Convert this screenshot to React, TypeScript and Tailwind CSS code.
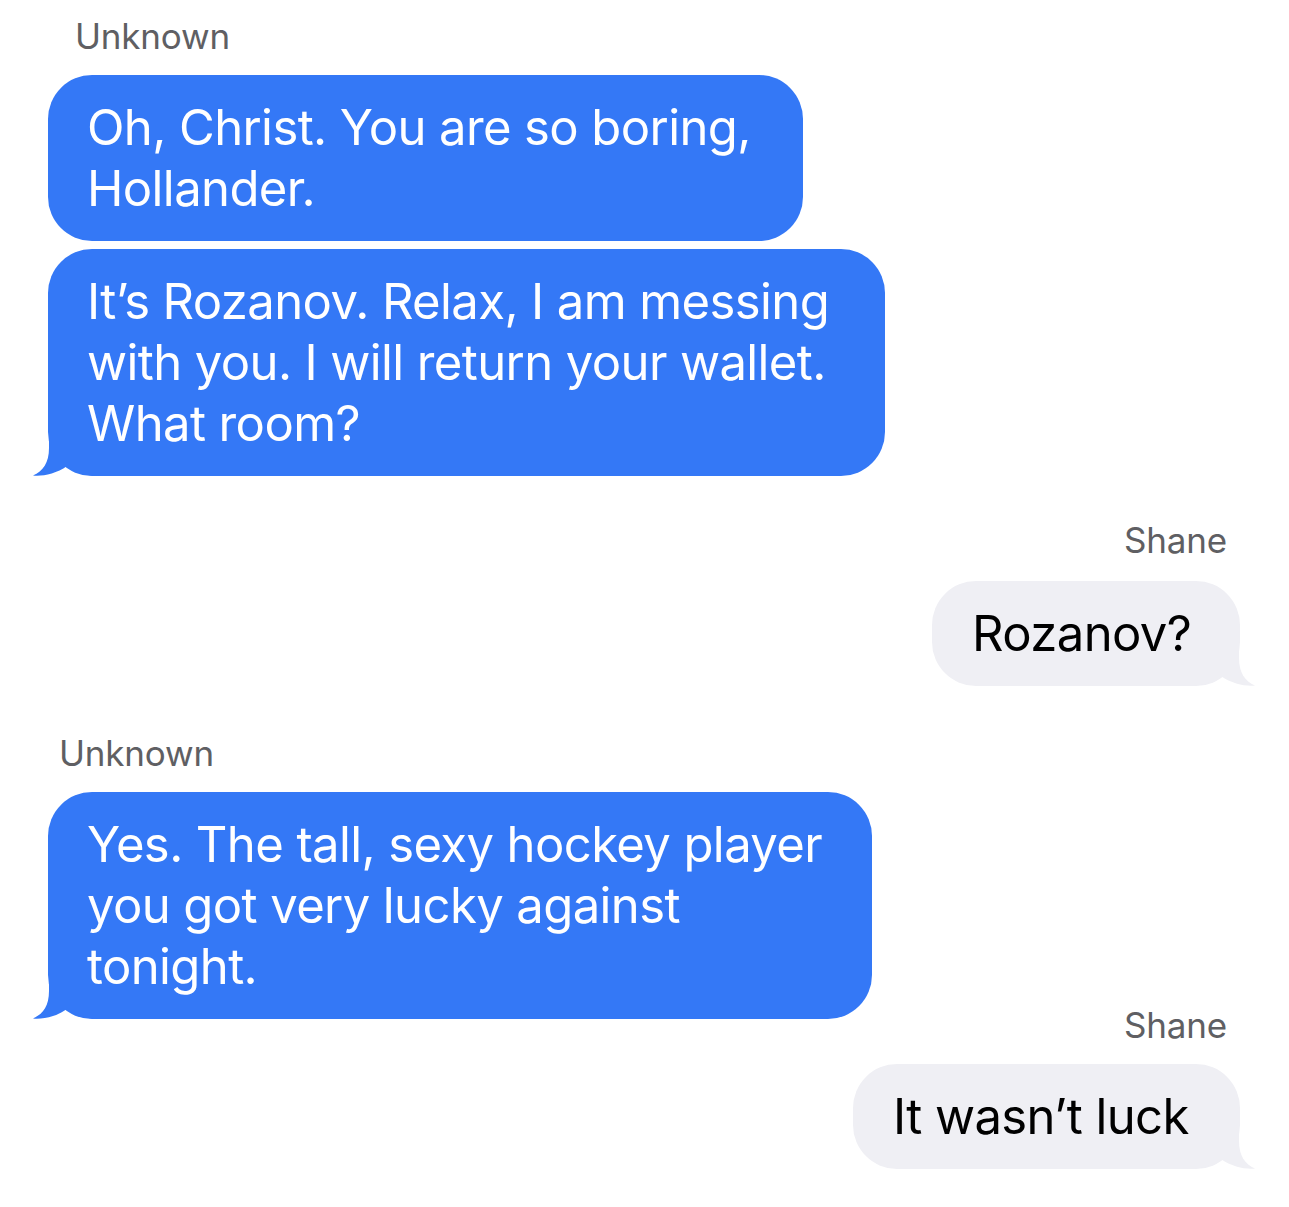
import React from "react";

type Side = "left" | "right";

function Tail({ side }: { side: Side }) {
  if (side === "left") {
    return (
      <svg
        className="absolute bottom-0 left-[-15px] fill-[#3478f6]"
        width="67"
        height="40"
        viewBox="0 0 67 40"
      >
        <path d="M16 0 L16 12 C16 27 10 35 0 39.5 C9 40.5 23 38 34 30 C43 37 55 40 67 40 L67 0 Z" />
      </svg>
    );
  }
  return (
    <svg
      className="absolute bottom-0 right-[-15px] -scale-x-100 fill-[#efeff4]"
      width="67"
      height="40"
      viewBox="0 0 67 40"
    >
      <path d="M16 0 L16 12 C16 27 10 35 0 39.5 C9 40.5 23 38 34 30 C43 37 55 40 67 40 L67 0 Z" />
    </svg>
  );
}

function Label({ name, className }: { name: string; className: string }) {
  return (
    <div className={`h-[40px] text-[35px] leading-[40px] tracking-[-0.2px] text-[#5f5f63] ${className}`}>
      {name}
    </div>
  );
}

function Incoming({ lines, width, tail, className }: { lines: string[]; width: string; tail?: boolean; className?: string }) {
  return (
    <div
      className={`relative ml-[48px] rounded-[44px] bg-[#3478f6] py-[22px] pl-[39px] text-[49px] leading-[61px] tracking-[-0.6px] whitespace-nowrap text-white ${width} ${className ?? ""}`}
    >
      {tail && <Tail side="left" />}
      <div className="relative">
        {lines.map((l) => (
          <div key={l}>{l}</div>
        ))}
      </div>
    </div>
  );
}

function Outgoing({ text, width, className }: { text: string; width: string; className?: string }) {
  return (
    <div
      className={`relative mr-[49px] self-end rounded-[44px] bg-[#efeff4] py-[22px] pl-[40px] text-[49px] leading-[61px] tracking-[-0.6px] whitespace-nowrap text-black ${width} ${className ?? ""}`}
    >
      <Tail side="right" />
      <div className="relative">{text}</div>
    </div>
  );
}

export default function App() {
  return (
    <div className="min-h-[1207px] w-[1289px] bg-white font-['Inter','Noto_Sans',sans-serif]">
      <div className="flex flex-col pt-[16px]">
        <Label name="Unknown" className="ml-[75px]" />
        <Incoming
          className="mt-[19px]"
          width="w-[755px]"
          lines={["Oh, Christ. You are so boring,", "Hollander."]}
        />
        <Incoming
          className="mt-[8px]"
          width="w-[837px]"
          tail
          lines={["It’s Rozanov. Relax, I am messing", "with you. I will return your wallet.", "What room?"]}
        />

        <Label name="Shane" className="mt-[44px] mr-[62px] self-end" />
        <Outgoing className="mt-[21px]" width="w-[308px]" text="Rozanov?" />

        <Label name="Unknown" className="mt-[47px] ml-[59px]" />
        <Incoming
          className="mt-[19px]"
          width="w-[824px]"
          tail
          lines={["Yes. The tall, sexy hockey player", "you got very lucky against", "tonight."]}
        />

        <Label name="Shane" className="mt-[-14px] mr-[62px] self-end" />
        <Outgoing className="mt-[19px]" width="w-[387px]" text="It wasn’t luck" />
      </div>
    </div>
  );
}
